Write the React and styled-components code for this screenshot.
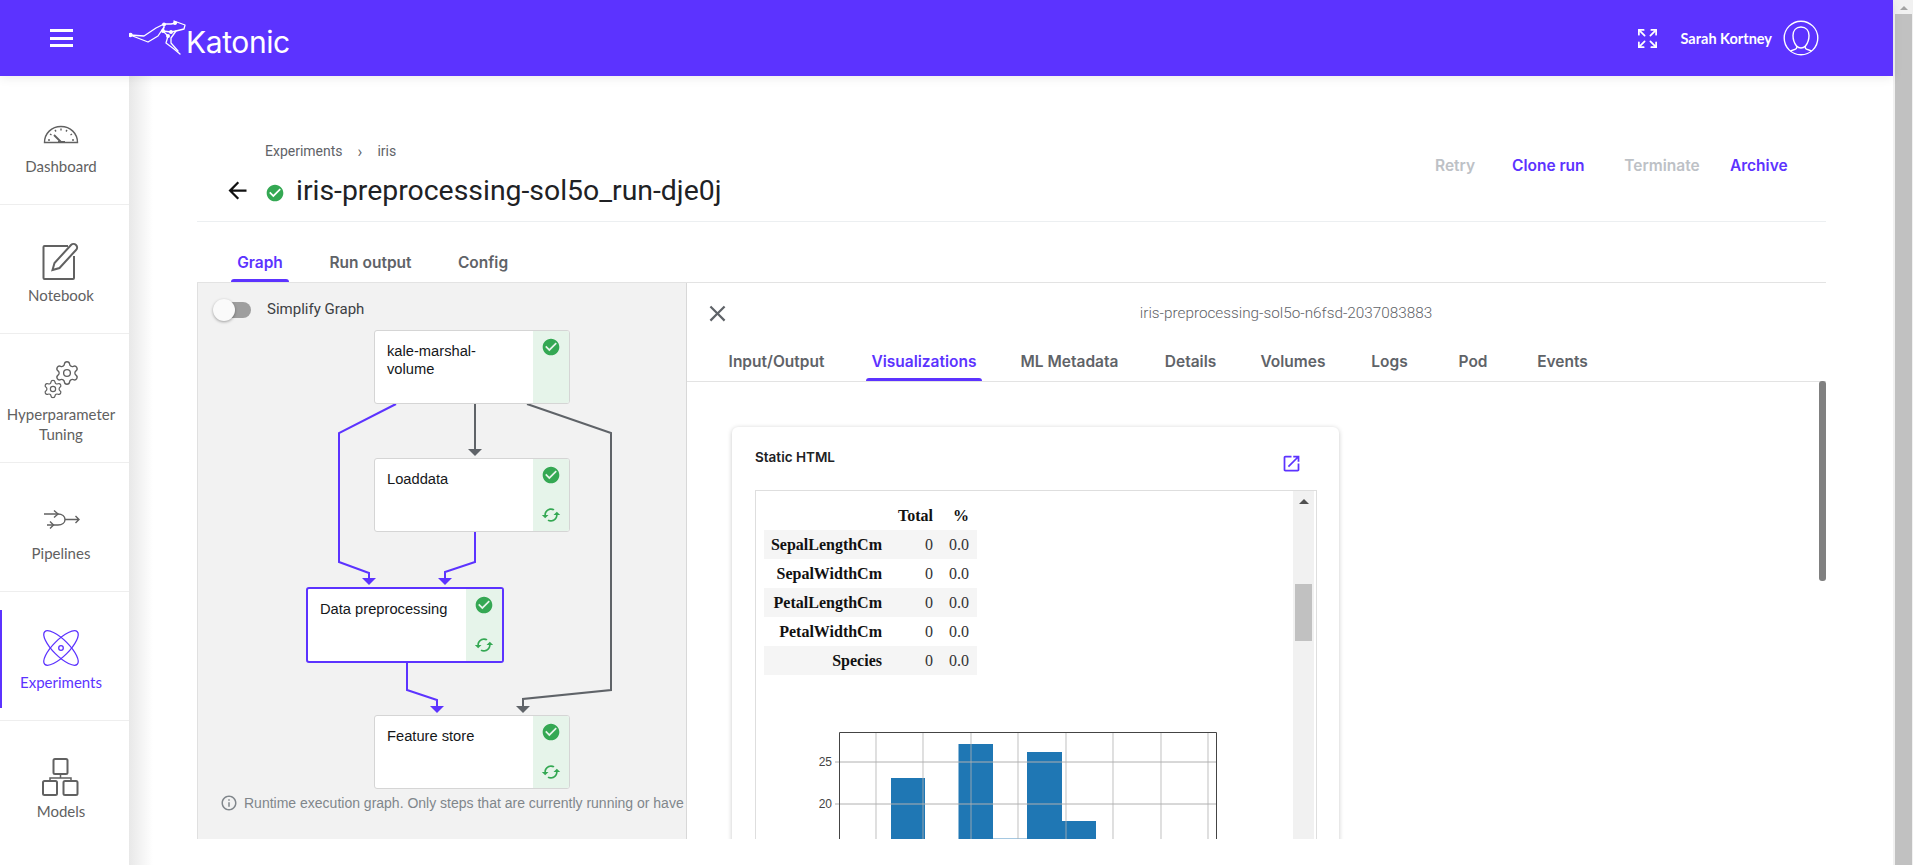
import React from "react";
import styled, { createGlobalStyle } from "styled-components";
import { Expand, Settings } from "lucide-react";

const PURPLE = "#5c33ff";
const GREEN = "#34a853";
const GREY = "#5f6368";

const GlobalStyle = createGlobalStyle`
  html, body {
    margin: 0;
    padding: 0;
    height: 100%;
    overflow: hidden;
    background: #fff;
    font-family: Roboto, "Liberation Sans", sans-serif;
  }
`;

const Shell = styled.div`
  display: flex;
  width: 100%;
  height: 100vh;
  overflow: hidden;
`;

const Page = styled.div`
  flex: 1;
  min-width: 0;
  display: flex;
  flex-direction: column;
`;

const PageScrollbar = styled.div`
  flex: 0 0 20px;
  background: #f1f1f1;
  padding-left: 2px;
  box-sizing: border-box;
  display: flex;
  flex-direction: column;
  align-items: center;
`;

const ScrollArrow = styled.div`
  width: 0;
  height: 0;
  margin: ${(p) => p.$margin};
  border-left: ${(p) => p.$size}px solid transparent;
  border-right: ${(p) => p.$size}px solid transparent;
  border-bottom: ${(p) => p.$size}px solid ${(p) => p.$color};
`;

const PageThumb = styled.div`
  width: 17px;
  flex: 1;
  margin-right: 1px;
  background: #c1c1c1;
`;

const Header = styled.header`
  flex: 0 0 76px;
  background: ${PURPLE};
  display: flex;
  align-items: center;
  padding: 0 74px 0 50px;
  position: relative;
  z-index: 2;
  box-shadow: 0 2px 10px rgba(0, 0, 0, 0.08);
`;

const Burger = styled.div`
  width: 23px;
  height: 18px;
  display: flex;
  flex-direction: column;
  justify-content: space-between;
  margin-right: 56px;

  span {
    display: block;
    height: 3px;
    background: #fff;
  }
`;

const Logo = styled.div`
  display: flex;
  align-items: flex-end;
  color: #fff;
`;

const LogoName = styled.span`
  font-family: Inter, sans-serif;
  font-size: 30px;
  font-weight: 400;
  line-height: 30px;
  letter-spacing: -0.4px;
  margin-left: -1px;
  margin-bottom: -1px;
`;

const HeaderRight = styled.div`
  margin-left: auto;
  display: flex;
  align-items: center;
  color: #fff;
`;

const UserName = styled.span`
  font-family: Lato, sans-serif;
  font-size: 14.5px;
  font-weight: 700;
  margin-left: 22px;
  margin-right: 11px;
  white-space: nowrap;
`;

const Body = styled.div`
  flex: 1;
  min-height: 0;
  display: flex;
`;

const Sidebar = styled.nav`
  flex: 0 0 129px;
  background: #fff;
  border-top-right-radius: 4px;
  position: relative;
  z-index: 1;
`;

const NavItem = styled.a`
  display: flex;
  flex-direction: column;
  align-items: center;
  justify-content: center;
  box-sizing: border-box;
  height: 129px;
  padding: 7px 7px 0 0;
  gap: 4px;
  border-bottom: 1px solid #eee;
  position: relative;
  color: ${(p) => (p.$active ? PURPLE : "#616161")};
  font-family: Lato, sans-serif;
  font-size: 15px;
  line-height: 20px;
  text-align: center;

  &:last-child {
    border-bottom: 0;
  }

  ${(p) =>
    p.$active &&
    `&::before {
      content: "";
      position: absolute;
      left: 0;
      top: 18px;
      bottom: 12px;
      width: 2px;
      background: ${PURPLE};
    }`}
`;

const NavIcon = styled.svg`
  display: block;
  width: 40px;
  height: 40px;
  flex: none;
  fill: none;
  stroke: currentColor;
  overflow: visible;
`;

const Main = styled.main`
  flex: 1;
  min-width: 0;
  padding: 0 67px 0 68px;
  background: linear-gradient(to right, #e8e8e8, #fff) no-repeat left top / 24px 100%;
`;

const TopBar = styled.div`
  display: flex;
  justify-content: space-between;
  height: 146px;
  box-sizing: border-box;
  padding: 65px 39px 0 31px;
  border-bottom: 1px solid #eceff1;
`;

const Breadcrumb = styled.div`
  display: flex;
  align-items: center;
  margin-left: 37px;
  height: 20px;
  font-size: 14px;
  color: ${GREY};

  i {
    font-style: normal;
    margin: 0 15px;
    font-size: 16px;
  }
`;

const TitleRow = styled.div`
  display: flex;
  align-items: center;
  height: 36px;
  margin-top: 11px;
  margin-left: -4px;
`;

const BackIcon = styled.svg`
  width: 27px;
  height: 27px;
  fill: #111;
  margin-right: 14px;
`;

const TitleCheck = styled.svg`
  width: 20px;
  height: 20px;
  fill: ${GREEN};
  margin-top: 6px;
  margin-right: 11px;
`;

const Title = styled.h1`
  margin: 0;
  font-size: 28.4px;
  font-weight: 400;
  color: #202124;
  white-space: nowrap;
`;

const Actions = styled.div`
  display: flex;
  height: 20px;
  margin-top: 15px;
`;

const ActionButton = styled.span`
  font-family: Inter, sans-serif;
  font-size: 15.5px;
  font-weight: 600;
  line-height: 20px;
  width: ${(p) => p.$w}px;
  margin-left: ${(p) => p.$gap}px;
  text-align: center;
  white-space: nowrap;
  color: ${(p) => (p.$disabled ? "#bdc1c6" : PURPLE)};
`;

const TabRow = styled.div`
  display: flex;
  align-items: stretch;
  box-sizing: border-box;
  height: ${(p) => p.$height}px;
  padding-left: ${(p) => p.$left}px;
  border-bottom: 1px solid #e3e3e3;
`;

const Tab = styled.div`
  position: relative;
  width: ${(p) => p.$w}px;
  margin-left: ${(p) => p.$gap || 0}px;
  display: flex;
  align-items: flex-end;
  justify-content: center;
  padding-bottom: ${(p) => p.$bottom}px;
  box-sizing: border-box;
  font-family: Inter, sans-serif;
  font-size: 15.5px;
  font-weight: 600;
  line-height: 20px;
  white-space: nowrap;
  color: ${(p) => (p.$active ? PURPLE : GREY)};

  ${(p) =>
    p.$active &&
    `&::after {
      content: "";
      position: absolute;
      left: 0;
      right: 0;
      bottom: 0;
      height: 3px;
      border-radius: 3px 3px 0 0;
      background: ${PURPLE};
    }`}
`;

const Workspace = styled.div`
  display: flex;
  height: 556px;
`;

const GraphPanel = styled.section`
  flex: 0 0 490px;
  box-sizing: border-box;
  border-left: 1px solid #e0e0e0;
  border-right: 1px solid #d8d8d8;
  background: #f2f2f2;
  overflow: hidden;
  display: flex;
  flex-direction: column;
`;

const ToggleRow = styled.div`
  flex: 0 0 47px;
  display: flex;
  align-items: flex-start;
  padding: 16px 0 0 15px;
  box-sizing: border-box;
`;

const Toggle = styled.div`
  position: relative;
  width: 38px;
  height: 22px;
  margin-right: 16px;

  &::before {
    content: "";
    position: absolute;
    left: 7px;
    right: 0;
    top: 3px;
    height: 16px;
    border-radius: 8px;
    background: #9e9e9e;
  }

  &::after {
    content: "";
    position: absolute;
    left: 0;
    top: 0;
    width: 22px;
    height: 22px;
    border-radius: 50%;
    background: #fafafa;
    box-shadow: 0 1px 3px rgba(0, 0, 0, 0.35);
  }
`;

const ToggleLabel = styled.span`
  font-size: 15px;
  line-height: 20px;
  color: #3c4043;
`;

const Canvas = styled.div`
  position: relative;
  flex: 0 0 460px;
`;

const Edges = styled.svg`
  position: absolute;
  left: 0;
  top: 0;
  width: 488px;
  height: 460px;
  overflow: visible;
`;

const NodeBox = styled.div`
  position: absolute;
  left: ${(p) => p.$x}px;
  top: ${(p) => p.$y}px;
  width: ${(p) => (p.$selected ? 198 : 196)}px;
  height: ${(p) => (p.$selected ? 76 : 74)}px;
  box-sizing: border-box;
  display: flex;
  background: #fff;
  border: ${(p) => (p.$selected ? `2px solid ${PURPLE}` : "1px solid #d5d5d5")};
  border-radius: 3px;
  overflow: hidden;
`;

const NodeName = styled.div`
  flex: 1;
  padding: 11px 14px 0 12px;
  font-family: "Liberation Sans", Arial, sans-serif;
  font-size: 14.7px;
  line-height: 18px;
  color: #15171a;
`;

const NodeStatus = styled.div`
  flex: 0 0 36px;
  background: #e6f4ea;
  display: flex;
  flex-direction: column;
  align-items: center;
  justify-content: space-between;
  padding: 6px 0 6px;
  box-sizing: border-box;
`;

const StatusIcon = styled.svg`
  width: 20px;
  height: 20px;
  fill: ${GREEN};
  display: block;
`;

const GraphNote = styled.div`
  display: flex;
  align-items: center;
  height: 26px;
  padding-left: 22px;
  font-family: "Liberation Sans", Arial, sans-serif;
  font-size: 14px;
  color: #80868b;
  white-space: nowrap;

  svg {
    width: 18px;
    height: 18px;
    fill: #80868b;
    margin-right: 6px;
    flex: none;
  }
`;

const DetailPanel = styled.section`
  flex: 1;
  min-width: 0;
  position: relative;
  overflow: hidden;
  background: #fff;
`;

const DetailHead = styled.div`
  display: flex;
  align-items: center;
  height: 60px;
  padding-left: 17px;
`;

const CloseIcon = styled.svg`
  width: 27px;
  height: 27px;
  fill: ${GREY};
  flex: none;
`;

const NodeTitle = styled.div`
  width: 294px;
  margin-left: 408px;
  text-align: center;
  font-size: 15.3px;
  font-weight: 300;
  color: ${GREY};
  white-space: nowrap;
`;

const DetailThumb = styled.div`
  position: absolute;
  right: 0;
  top: 98px;
  width: 7px;
  height: 200px;
  border-radius: 3px;
  background: #808080;
`;

const DetailBody = styled.div`
  padding: 45px 0 0 45px;
`;

const Card = styled.article`
  width: 607px;
  height: 500px;
  box-sizing: border-box;
  padding: 20px 22px 0 23px;
  border-radius: 6px;
  background: #fff;
  box-shadow: 0 1px 5px rgba(0, 0, 0, 0.22);
`;

const CardHead = styled.div`
  display: flex;
  justify-content: space-between;
  height: 43px;
`;

const CardTitle = styled.span`
  font-family: Inter, sans-serif;
  font-size: 13.5px;
  font-weight: 600;
  line-height: 20px;
  color: #202124;
`;

const OpenIcon = styled.svg`
  width: 21px;
  height: 21px;
  fill: ${PURPLE};
  margin: 6px 15px 0 0;
`;

const Frame = styled.div`
  display: flex;
  height: 420px;
  border: 1px solid #dedede;
  box-sizing: border-box;
`;

const FrameContent = styled.div`
  flex: 1;
  min-width: 0;
  padding-top: 10px;
  overflow: hidden;
`;

const DataTable = styled.table`
  margin-left: 8px;
  width: 213px;
  border-collapse: collapse;
  table-layout: fixed;
  font-family: "Liberation Serif", "Times New Roman", serif;
  font-size: 16px;
  color: #111;

  th, td {
    height: 29px;
    padding: 0 8px 0 0;
    text-align: right;
    white-space: nowrap;
  }

  td {
    font-weight: 400;
    color: #333;
  }

  tbody tr:nth-child(odd) {
    background: #f5f5f5;
  }
`;

const Chart = styled.svg`
  display: block;
  width: 538px;
  height: 130px;
  margin-top: 45px;
`;

const FrameScroll = styled.div`
  flex: 0 0 21px;
  background: #f1f1f1;
  margin-right: 2px;
  display: flex;
  flex-direction: column;
  align-items: center;
`;

const FrameThumb = styled.div`
  width: 17px;
  height: 57px;
  margin-top: 80px;
  background: #c1c1c1;
`;

const CHECK_PATH =
  "M12 2C6.48 2 2 6.48 2 12s4.48 10 10 10 10-4.48 10-10S17.52 2 12 2zm-2 15l-5-5 1.41-1.41L10 14.17l7.59-7.59L19 8l-9 9z";
const CACHED_PATH =
  "M19 8l-4 4h3c0 3.31-2.69 6-6 6-1.01 0-1.97-.25-2.8-.7l-1.46 1.46C8.97 19.54 10.43 20 12 20c4.42 0 8-3.58 8-8h3l-4-4zM6 12c0-3.31 2.69-6 6-6 1.01 0 1.97.25 2.8.7l1.46-1.46C15.03 4.46 13.57 4 12 4c-4.42 0-8 3.58-8 8H1l4 4 4-4H6z";

const nodes = [
  { name: "kale-marshal-volume", x: 176, y: 0 },
  { name: "Loaddata", x: 176, y: 128, cached: true },
  { name: "Data preprocessing", x: 108, y: 257, cached: true, selected: true },
  { name: "Feature store", x: 176, y: 385, cached: true },
];

// page coordinates minus the canvas origin (198, 330)
const edges = [
  { color: PURPLE, points: "198,74 141,103 141,232 171,243 171,249", tip: [171, 255] },
  { color: PURPLE, points: "277,202 277,232 247,242 247,249", tip: [247, 255] },
  { color: GREY, points: "277,74 277,120", tip: [277, 126] },
  { color: GREY, points: "329,74 413,103 413,360 325,369 325,377", tip: [325, 383] },
  { color: PURPLE, points: "209,333 209,360 239,370 239,377", tip: [239, 383] },
];

const mainTabs = [
  { label: "Graph", w: 58, active: true },
  { label: "Run output", w: 97, gap: 33 },
  { label: "Config", w: 64, gap: 32 },
];

const detailTabs = [
  { label: "Input/Output", w: 111 },
  { label: "Visualizations", w: 116, gap: 34, active: true },
  { label: "ML Metadata", w: 109, gap: 33 },
  { label: "Details", w: 63, gap: 35 },
  { label: "Volumes", w: 76, gap: 33 },
  { label: "Logs", w: 47, gap: 35 },
  { label: "Pod", w: 40, gap: 40 },
  { label: "Events", w: 63, gap: 38 },
];

const rows = ["SepalLengthCm", "SepalWidthCm", "PetalLengthCm", "PetalWidthCm", "Species"];

const bars = [
  { x: 891, w: 34, top: 778 },
  { x: 958.5, w: 34.5, top: 744 },
  { x: 993, w: 34, top: 838, light: true },
  { x: 1027, w: 35, top: 752 },
  { x: 1062, w: 34, top: 821 },
];

const gridX = [876, 923, 971, 1018, 1066, 1113, 1161, 1208];
const gridY = [{ y: 762, label: "25" }, { y: 804, label: "20" }];

function KangarooLogo() {
  return (
    <svg width="58" height="36" viewBox="128 19 58 36" fill="none" stroke="#fff" strokeWidth="1.3" strokeLinecap="round" strokeLinejoin="round">
      <path d="M129 34L143 35 155 27 163 23 170 23 175 22" />
      <path d="M129 34L147 41 157 35 163 26" />
      <path d="M175 22L173 20 184 24 183 28 175 30 170 37 170 42 177 50" />
      <path d="M162 30L167 35 165 42 173 48 179 53" />
      <path d="M163 26L162 30 170 31 175 30" />
      <circle cx="129.5" cy="34" r="1.5" fill="#fff" />
      <circle cx="163" cy="23.5" r="1.3" fill="#fff" />
      <circle cx="162" cy="30" r="1.3" fill="#fff" />
      <circle cx="170" cy="31" r="1.3" fill="#fff" />
      <circle cx="167" cy="35" r="1.3" fill="#fff" />
      <circle cx="174" cy="22" r="1.3" fill="#fff" />
    </svg>
  );
}

function Avatar() {
  return (
    <svg width="36" height="36" viewBox="0 0 36 36" fill="none" stroke="#fff" strokeWidth="1.4">
      <circle cx="18" cy="18" r="16.8" />
      <path d="M18 7c-5 0-8 3.5-8 8.5 0 4 1.5 8 3.5 10.5.7 1.2.3 2.5-1 3.2L7.5 31" />
      <path d="M18 7c5 0 8 3.5 8 8.5 0 4-1.5 8-3.5 10.5-.7 1.2-.3 2.5 1 3.2l5 1.8" />
      <path d="M13.5 26c1.5 1.5 3 2 4.5 2s3-.5 4.5-2" />
    </svg>
  );
}

function NavGlyph({ name }) {
  if (name === "gauge") {
    return (
      <NavIcon viewBox="0 0 40 40" strokeWidth="1.4">
        <path d="M3.5 30.5c0-9 7-16 16.5-16s16.5 7 16.5 16z" />
        <path d="M20 30l-7-7M17 30h7" strokeWidth="1.8" />
        <path d="M7 28h2M9 22l1.5 1M14 18l1 1.5M20 16.5v2M26 18l-1 1.5M31 22l-1.5 1M33 28h-2" />
      </NavIcon>
    );
  }
  if (name === "note") {
    return (
      <NavIcon viewBox="0 0 40 40" strokeWidth="2">
        <path d="M27 5H3.5a1 1 0 0 0-1 1v31a1 1 0 0 0 1 1H32a1 1 0 0 0 1-1V15" />
        <path d="M11.5 29l2-7L30 4c1.5-1.5 3.5-1.5 5 0s1.5 3.5 0 5L18.5 27z" />
      </NavIcon>
    );
  }
  if (name === "gears") {
    return (
      <NavIcon viewBox="0 0 40 40">
        <Settings x="12.5" y="-0.5" size={27} strokeWidth={1.2} />
        <Settings x="1.5" y="18.5" size={21} strokeWidth={1.4} />
      </NavIcon>
    );
  }
  if (name === "pipes") {
    return (
      <NavIcon viewBox="0 0 40 40" strokeWidth="1.4">
        <path d="M3 15h14c4 0 7 2 7 5.5S21 26 17 26H6" />
        <path d="M13 11.5l4 3.5-4 3.5M9 22.5L12.5 26 9 29.5" />
        <path d="M24 20.5h14M34.5 17l3.5 3.5-3.5 3.5" />
      </NavIcon>
    );
  }
  if (name === "atom") {
    return (
      <NavIcon viewBox="0 0 40 40" strokeWidth="1.3">
        <ellipse cx="20" cy="20" rx="23" ry="8" transform="rotate(45 20 20)" />
        <ellipse cx="20" cy="20" rx="23" ry="8" transform="rotate(-45 20 20)" />
        <circle cx="20" cy="20" r="2.3" />
      </NavIcon>
    );
  }
  return (
    <NavIcon viewBox="0 0 40 40" strokeWidth="2">
      <rect x="12.5" y="2" width="14" height="15" rx="1.5" />
      <rect x="2" y="24" width="14" height="14" rx="1.5" />
      <rect x="22.5" y="24" width="14" height="14" rx="1.5" />
      <path d="M19.5 17v4M9 24v-3h21v3" strokeWidth="1.5" />
    </NavIcon>
  );
}

const navItems = [
  { icon: "gauge", label: "Dashboard" },
  { icon: "note", label: "Notebook" },
  { icon: "gears", label: "Hyperparameter Tuning" },
  { icon: "pipes", label: "Pipelines" },
  { icon: "atom", label: "Experiments", active: true },
  { icon: "models", label: "Models" },
];

function GraphNode({ node }) {
  return (
    <NodeBox $x={node.x} $y={node.y} $selected={node.selected}>
      <NodeName>{node.name}</NodeName>
      <NodeStatus>
        <StatusIcon viewBox="0 0 24 24"><path d={CHECK_PATH} /></StatusIcon>
        {node.cached && <StatusIcon viewBox="0 0 24 24"><path d={CACHED_PATH} /></StatusIcon>}
      </NodeStatus>
    </NodeBox>
  );
}

export default function App() {
  return (
    <Shell>
      <GlobalStyle />
      <Page>
        <Header>
          <Burger><span /><span /><span /></Burger>
          <Logo>
            <KangarooLogo />
            <LogoName>Katonic</LogoName>
          </Logo>
          <HeaderRight>
            <Expand size={23} strokeWidth={1.8} />
            <UserName>Sarah Kortney</UserName>
            <Avatar />
          </HeaderRight>
        </Header>
        <Body>
          <Sidebar>
            {navItems.map((item) => (
              <NavItem key={item.label} $active={item.active}>
                <NavGlyph name={item.icon} />
                <span>{item.label}</span>
              </NavItem>
            ))}
          </Sidebar>
          <Main>
            <TopBar>
              <div>
                <Breadcrumb>Experiments<i>›</i>iris</Breadcrumb>
                <TitleRow>
                  <BackIcon viewBox="0 0 24 24"><path d="M20 11H7.83l5.59-5.59L12 4l-8 8 8 8 1.41-1.41L7.83 13H20v-2z" /></BackIcon>
                  <TitleCheck viewBox="0 0 24 24"><path d={CHECK_PATH} /></TitleCheck>
                  <Title>iris-preprocessing-sol5o_run-dje0j</Title>
                </TitleRow>
              </div>
              <Actions>
                <ActionButton $w={40} $gap={0} $disabled>Retry</ActionButton>
                <ActionButton $w={72} $gap={37}>Clone run</ActionButton>
                <ActionButton $w={76} $gap={40} $disabled>Terminate</ActionButton>
                <ActionButton $w={57} $gap={30}>Archive</ActionButton>
              </Actions>
            </TopBar>
            <TabRow $height={61} $left={34}>
              {mainTabs.map((t) => (
                <Tab key={t.label} $w={t.w} $gap={t.gap} $active={t.active} $bottom={9}>{t.label}</Tab>
              ))}
            </TabRow>
            <Workspace>
              <GraphPanel>
                <ToggleRow>
                  <Toggle />
                  <ToggleLabel>Simplify Graph</ToggleLabel>
                </ToggleRow>
                <Canvas>
                  <Edges viewBox="0 0 488 460" fill="none" strokeWidth="2">
                    {edges.map((e) => (
                      <g key={e.points}>
                        <polyline points={e.points} stroke={e.color} />
                        <polygon
                          points={`${e.tip[0] - 7},${e.tip[1] - 7} ${e.tip[0] + 7},${e.tip[1] - 7} ${e.tip[0]},${e.tip[1]}`}
                          fill={e.color}
                        />
                      </g>
                    ))}
                  </Edges>
                  {nodes.map((n) => <GraphNode key={n.name} node={n} />)}
                </Canvas>
                <GraphNote>
                  <svg viewBox="0 0 24 24"><path d="M11 7h2v2h-2zm0 4h2v6h-2zm1-9C6.48 2 2 6.48 2 12s4.48 10 10 10 10-4.48 10-10S17.52 2 12 2zm0 18c-4.41 0-8-3.59-8-8s3.59-8 8-8 8 3.59 8 8-3.59 8-8 8z" /></svg>
                  Runtime execution graph. Only steps that are currently running or have
                </GraphNote>
              </GraphPanel>
              <DetailPanel>
                <DetailHead>
                  <CloseIcon viewBox="0 0 24 24"><path d="M19 6.41L17.59 5 12 10.59 6.41 5 5 6.41 10.59 12 5 17.59 6.41 19 12 13.41 17.59 19 19 17.59 13.41 12z" /></CloseIcon>
                  <NodeTitle>iris-preprocessing-sol5o-n6fsd-2037083883</NodeTitle>
                </DetailHead>
                <TabRow $height={39} $left={34}>
                  {detailTabs.map((t) => (
                    <Tab key={t.label} $w={t.w} $gap={t.gap} $active={t.active} $bottom={9}>{t.label}</Tab>
                  ))}
                </TabRow>
                <DetailThumb />
                <DetailBody>
                  <Card>
                    <CardHead>
                      <CardTitle>Static HTML</CardTitle>
                      <OpenIcon viewBox="0 0 24 24"><path d="M19 19H5V5h7V3H5c-1.11 0-2 .9-2 2v14c0 1.1.89 2 2 2h14c1.1 0 2-.9 2-2v-7h-2v7zM14 3v2h3.59l-9.83 9.83 1.41 1.41L19 6.41V10h2V3h-7z" /></OpenIcon>
                    </CardHead>
                    <Frame>
                      <FrameContent>
                        <DataTable>
                          <colgroup>
                            <col style={{ width: 126 }} />
                            <col style={{ width: 51 }} />
                            <col style={{ width: 36 }} />
                          </colgroup>
                          <thead>
                            <tr><th /><th>Total</th><th>%</th></tr>
                          </thead>
                          <tbody>
                            {rows.map((r) => (
                              <tr key={r}><th>{r}</th><td>0</td><td>0.0</td></tr>
                            ))}
                          </tbody>
                        </DataTable>
                        <Chart viewBox="756 720 538 130">
                          {bars.map((b) => (
                            <rect key={b.x} x={b.x} y={b.top} width={b.w} height={850 - b.top} fill={b.light ? "#a5c8e1" : "#1f77b4"} />
                          ))}
                          {gridX.map((x) => <line key={x} x1={x} x2={x} y1="732" y2="850" stroke="#b0b0b0" strokeOpacity="0.8" />)}
                          {gridY.map((g) => (
                            <g key={g.y}>
                              <line x1="835" x2="1216" y1={g.y} y2={g.y} stroke="#b0b0b0" />
                              <text x="832" y={g.y + 4} textAnchor="end" fontFamily="'Liberation Sans', sans-serif" fontSize="12" fill="#444">{g.label}</text>
                            </g>
                          ))}
                          <path d="M839.5 850V732.5H1216.5V850" fill="none" stroke="#444" />
                        </Chart>
                      </FrameContent>
                      <FrameScroll>
                        <ScrollArrow $size={5} $color="#505050" $margin="8px 0 0" />
                        <FrameThumb />
                      </FrameScroll>
                    </Frame>
                  </Card>
                </DetailBody>
              </DetailPanel>
            </Workspace>
          </Main>
        </Body>
      </Page>
      <PageScrollbar>
        <ScrollArrow $size={4} $color="#a3a3a3" $margin="6px 0 4px" />
        <PageThumb />
      </PageScrollbar>
    </Shell>
  );
}
